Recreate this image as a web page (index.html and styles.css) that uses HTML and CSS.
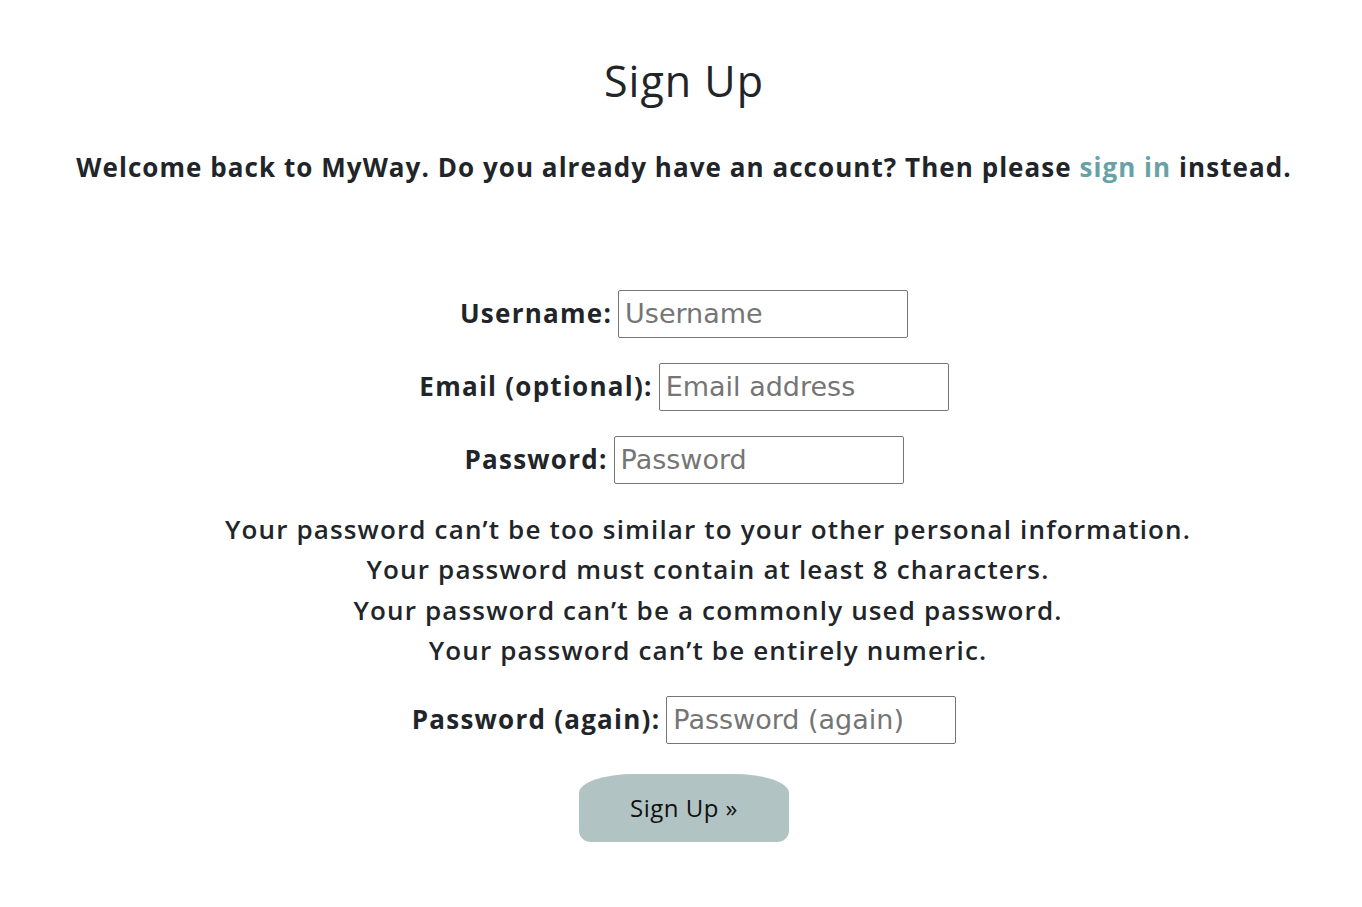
FILE: index.html
```html
<!DOCTYPE html>
<html lang="en">
<head>
<meta charset="utf-8">
<title>Sign Up</title>
<link rel="stylesheet" href="styles.css">
</head>
<body>
<main class="page">
  <h1 class="title">Sign Up</h1>
  <p class="intro">Welcome back to MyWay. Do you already have an account? Then please <a class="link" href="#">sign in</a> instead.</p>
  <form class="signup">
    <div class="row">
      <label class="label" for="u">Username:</label>
      <input class="field" id="u" type="text" placeholder="Username">
    </div>
    <div class="row">
      <label class="label" for="e">Email (optional):</label>
      <input class="field" id="e" type="email" placeholder="Email address">
    </div>
    <div class="row">
      <label class="label" for="p1">Password:</label>
      <input class="field" id="p1" type="password" placeholder="Password">
    </div>
    <ul class="help">
      <li>Your password can’t be too similar to your other personal information.</li>
      <li>Your password must contain at least 8 characters.</li>
      <li>Your password can’t be a commonly used password.</li>
      <li>Your password can’t be entirely numeric.</li>
    </ul>
    <div class="row">
      <label class="label" for="p2">Password (again):</label>
      <input class="field" id="p2" type="password" placeholder="Password (again)">
    </div>
    <button class="submit" type="submit">Sign Up »</button>
  </form>
</main>
</body>
</html>
```

FILE: styles.css
```css
html, body {
  margin: 0;
  padding: 0;
  background: #ffffff;
}

body {
  font-family: "Open Sans", "Liberation Sans", sans-serif;
  color: #212529;
  font-size: 26px;
  line-height: 1.5;
}

.page {
  display: flex;
  flex-direction: column;
  align-items: center;
  padding-top: 55px;
  padding-left: 6px;
}

.title {
  margin: 0;
  font-size: 43px;
  font-weight: 500;
  line-height: 1.2;
  letter-spacing: 1px;
}

.intro {
  margin: 41px 0 0;
  font-weight: 700;
  letter-spacing: 1.05px;
  text-align: center;
}

.link {
  color: #68a2a7;
  text-decoration: none;
}

.signup {
  margin-top: 103px;
  display: flex;
  flex-direction: column;
  align-items: center;
  gap: 25px;
}

.row {
  display: flex;
  align-items: center;
  gap: 6px;
}

.label {
  font-weight: 700;
  letter-spacing: 1.25px;
}

.field {
  box-sizing: border-box;
  width: 290px;
  height: 48px;
  padding: 0 6px;
  border: 1px solid #767676;
  border-radius: 2px;
  font-family: "DejaVu Sans", "Open Sans", sans-serif;
  font-size: 27px;
  color: #212529;
  background: #fff;
}

.field::placeholder {
  color: #757575;
}

.help {
  list-style: none;
  margin: 0;
  padding: 0 0 0 48px;
  text-align: center;
  font-weight: 600;
  letter-spacing: 1.15px;
  line-height: 40.5px;
}

.submit {
  margin-top: 5px;
  width: 210px;
  height: 68px;
  border: none;
  border-radius: 55px 55px 12px 12px / 19px 19px 11px 11px;
  background: #b1c4c3;
  color: #111;
  font-family: inherit;
  font-size: 24px;
  letter-spacing: 0.5px;
  cursor: pointer;
}
```
